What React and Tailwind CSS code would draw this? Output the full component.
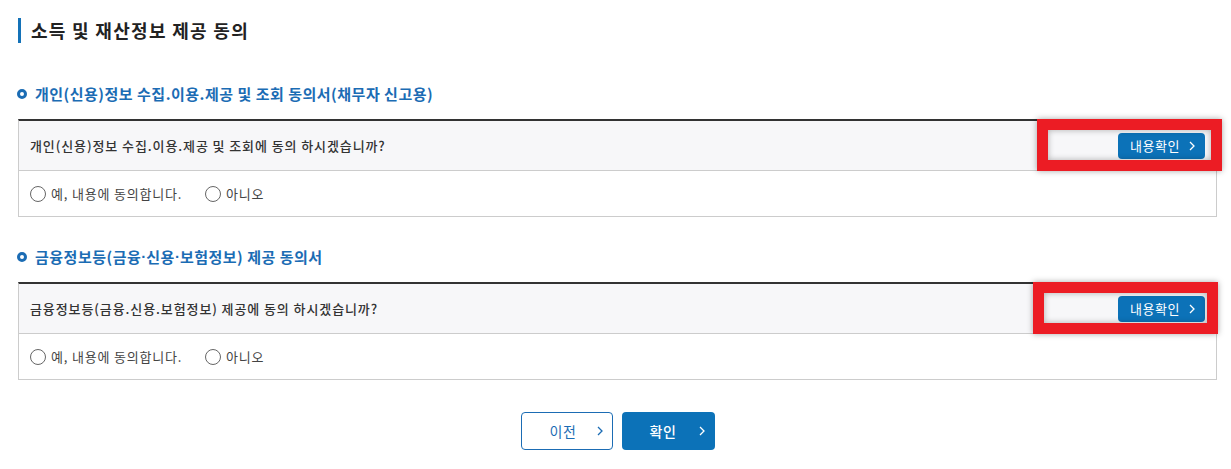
import React from "react";

function Chevron({ className = "" }) {
  return (
    <svg width="6" height="10" viewBox="0 0 6 10" className={className} fill="none">
      <polyline points="1,1 5,5 1,9" stroke="currentColor" strokeWidth="1.3" />
    </svg>
  );
}

function Highlight({ className }) {
  return (
    <div
      className={`absolute w-[185px] border-[11px] border-[#ec1c24] shadow-[0_0_6px_rgba(0,0,0,0.35),inset_0_0_6px_rgba(0,0,0,0.3)] pointer-events-none ${className}`}
    />
  );
}

function Agreement({ title, question, highlight }) {
  return (
    <section>
      <h3 className="flex items-center h-[20px] text-[15px] font-bold text-[#1b6cb4] tracking-[0.5px]">
        <span className="w-[10px] h-[10px] rounded-full border-[3px] border-[#1b6cb4] mr-[8px] ml-[-1px]" />
        {title}
      </h3>
      <div className="mt-[15px] border-t-2 border-[#333] border-x border-b border-x-[#ccc] border-b-[#ccc]">
        <div className="relative h-[50px] bg-[#f7f7f9] border-b border-[#ccc] flex items-center justify-between pl-[11px] pr-[11px]">
          <p className="text-[13px] font-medium text-[#333] tracking-[0.9px]">{question}</p>
          <button className="flex items-center h-[26px] w-[87px] rounded-[4px] bg-[#0c72b8] text-white text-[13px] tracking-[0.5px] pl-[12px] pr-[10px] justify-between">
            <span>내용확인</span>
            <Chevron />
          </button>
          <Highlight className={highlight} />
        </div>
        <div className="h-[45px] flex items-center pl-[11px] pt-[1px] text-[13px] text-[#444] tracking-[0.8px]">
          <label className="flex items-center">
            <span className="w-[16px] h-[16px] rounded-full border border-[#666] bg-white mr-[5px]" />
            예, 내용에 동의합니다.
          </label>
          <label className="flex items-center ml-[23px]">
            <span className="w-[16px] h-[16px] rounded-full border border-[#666] bg-white mr-[5px]" />
            아니오
          </label>
        </div>
      </div>
    </section>
  );
}

const Dot = () => <span className="font-['Liberation_Sans'] tracking-normal">·</span>;

export default function App() {
  return (
    <div
      className="w-[1231px] h-[469px] bg-white overflow-hidden"
      style={{ fontFamily: '"Noto Sans CJK KR", "Noto Sans", sans-serif' }}
    >
      <div className="ml-[18px] w-[1199px] pt-[18px]">
        <h2 className="flex items-center h-[25px] border-l-[3px] border-[#1472b8] pl-[10px] text-[18px] font-bold text-[#222] tracking-[1.3px]">
          소득 및 재산정보 제공 동의
        </h2>

        <div className="mt-[41px]">
          <Agreement
            title="개인(신용)정보 수집.이용.제공 및 조회 동의서(채무자 신고용)"
            question="개인(신용)정보 수집.이용.제공 및 조회에 동의 하시겠습니까?"
            highlight="top-[-2px] bottom-[-1px] right-[-6px]"
          />
        </div>

        <div className="mt-[30px]">
          <Agreement
            title={<>금융정보등(금융<Dot />신용<Dot />보험정보) 제공 동의서</>}
            question="금융정보등(금융.신용.보험정보) 제공에 동의 하시겠습니까?"
            highlight="top-[-2px] bottom-[-1px] right-[-2px]"
          />
        </div>

        <div className="mt-[32px] flex justify-center gap-[9px]">
          <button className="flex items-center h-[38px] w-[92px] rounded-[4px] border border-[#1b6cb4] text-[#1b6cb4] text-[14px] tracking-[0.5px] pl-[28px] pr-[9px] justify-between">
            <span>이전</span>
            <Chevron />
          </button>
          <button className="flex items-center h-[38px] w-[93px] rounded-[4px] bg-[#0c72b8] text-white text-[14px] font-medium tracking-[0.5px] pl-[28px] pr-[10px] justify-between">
            <span>확인</span>
            <Chevron />
          </button>
        </div>
      </div>
    </div>
  );
}
